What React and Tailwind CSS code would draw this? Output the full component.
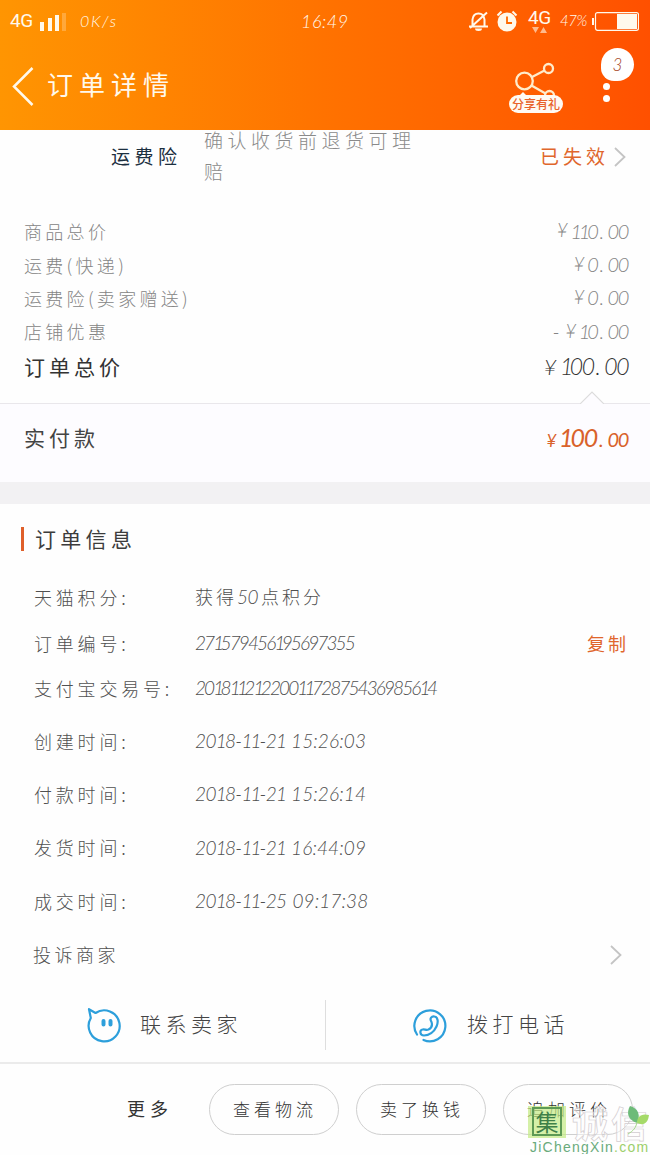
const PRICES = [
  { label: '商品总价', value: '110.00' },
  { label: '运费(快递)', value: '0.00' },
  { label: '运费险(卖家赠送)', value: '0.00' },
  { label: '店铺优惠', value: '10.00', minus: true },
]

const TIMES = [
  { label: '创建时间:', date: '2018-11-21', time: '15:26:03' },
  { label: '付款时间:', date: '2018-11-21', time: '15:26:14' },
  { label: '发货时间:', date: '2018-11-21', time: '16:44:09' },
  { label: '成交时间:', date: '2018-11-25', time: '09:17:38' },
]

const ACTIONS = ['查看物流', '卖了换钱', '追加评价']

function Chevron({ className }) {
  return (
    <svg viewBox="0 0 12 20" className={className} fill="none" stroke="currentColor" strokeWidth="1.8">
      <path d="M1 1l9.5 9L1 19" />
    </svg>
  )
}

// Ones are set tighter than the other digits
function Digits({ children, one }) {
  return children.split(/(1+)/).map((part, i) => (
    part.startsWith('1') ? <span key={i} className={one}>{part}</span> : part
  ))
}

function StatusBar() {
  return (
    <div className="flex h-[42px] items-center pl-[10px] pr-[10px]">
      <span className="w-[29px] shrink-0 font-['Roboto'] text-[19px] tracking-[-0.5px]">4G</span>
      <svg className="mt-[2px] h-[18px] w-[27px] shrink-0" viewBox="0 0 27 18" fill="currentColor">
        <rect x="1" y="9" width="4" height="9" />
        <rect x="9" y="5" width="4" height="13" />
        <rect x="16" y="2" width="4" height="16" />
        <rect x="23" y="0" width="4" height="18" opacity="0.25" />
      </svg>
      <span className="ml-[14px] w-[221px] shrink-0 font-['Lato'] text-[16px] font-light italic tracking-[1.700px]">0K/s</span>
      <span className="w-[167px] shrink-0 font-['Lato'] text-[18px] font-light italic tracking-[0.500px]">16:49</span>

      {/* muted bell */}
      <svg className="h-[22px] w-[21px] shrink-0" viewBox="0 0 21 22" fill="none" stroke="currentColor" strokeWidth="2">
        <path d="M1 16.500h19M4.500 16V9.500C5 5.500 7 3.500 10.500 3.500s5.500 2 6 6V16M19 2.500L2 18" />
        <path d="M7 18.500h7a3.500 2.500 0 0 1-7 0z" fill="currentColor" stroke="none" />
      </svg>
      {/* alarm */}
      <svg className="ml-[7px] h-[22px] w-[22px] shrink-0" viewBox="0 0 22 22" fill="none" stroke="currentColor">
        <circle cx="11" cy="12" r="9.500" fill="currentColor" stroke="none" />
        <path d="M1.500 5.500L5.500 1.500M20.500 5.500L16.500 1.500" strokeWidth="2" />
        <path d="M11 6.500V13h5" stroke="#ff6a00" strokeWidth="1.800" />
      </svg>
      <div className="ml-[10px] flex w-[32px] shrink-0 flex-col">
        <span className="font-['Roboto'] text-[19px] leading-[18px] tracking-[-0.500px]">4G</span>
        <svg className="ml-[4px] h-[7px] w-[16px] opacity-60" viewBox="0 0 16 7" fill="currentColor">
          <path d="M0 0h7L3.500 6zM8 6h7l-3.500-6z" />
        </svg>
      </div>
      <span className="mb-[1px] w-[32px] shrink-0 font-['Lato'] text-[15px] font-light italic tracking-[-0.500px]">47%</span>
      <svg className="h-[19px] w-[47px] shrink-0" viewBox="0 0 47 19" fill="none" stroke="currentColor">
        <rect x="3.500" y="0.700" width="43" height="17.600" rx="2" strokeWidth="1.200" />
        <rect x="25" y="2" width="20" height="15" fill="currentColor" stroke="none" />
        <path d="M1 6v7" strokeWidth="2" />
      </svg>
    </div>
  )
}

function Header() {
  return (
    <header className="h-[130px] shrink-0 bg-linear-to-r from-[#ff9502] via-[#ff7200] to-[#ff5000] text-[#fff9ec]">
      <StatusBar />
      <div className="flex h-[88px] items-start pl-[12px]">
        <svg className="mt-[25px] h-[39px] w-[22px]" viewBox="0 0 22 39" fill="none" stroke="currentColor" strokeWidth="2.500">
          <path d="M20.500 1L2 19.500 20.500 38" />
        </svg>
        <h1 className="ml-[13px] mt-[22px] w-[462px] text-[26px] leading-[40px] tracking-[6px]">订单详情</h1>

        <div className="relative mt-[20px] h-[52px] w-[54px]">
          <svg className="absolute left-[6px] top-0 h-[40px] w-[42px]" viewBox="0 0 42 40" fill="none" stroke="#ffeccb" strokeWidth="2.300">
            <circle cx="9.500" cy="19" r="8.300" />
            <circle cx="33.500" cy="6.500" r="4.500" />
            <circle cx="34.500" cy="33.500" r="4.500" />
            <path d="M17 15L29.500 8.500M16.500 23.500L30.500 31.500" />
            <path d="M4 34l4-4 4 4z" fill="#fffaf3" stroke="none" />
          </svg>
          <span className="absolute left-0 top-[33px] h-[18px] w-[54px] rounded-full bg-[#fffaf3] text-center text-[12px] font-medium leading-[18px] text-[#e8622a]">
            分享有礼
          </span>
        </div>

        <div className="ml-[38px] flex w-[33px] flex-col">
          <div className="mt-[6px] flex h-[33px] w-[33px] items-center justify-center rounded-[16.500px] rounded-bl-[13px] bg-white font-['Lato'] text-[17px] font-light italic text-[#a5431c]">
            3
          </div>
          <span className="ml-[2px] mt-[2px] h-[7px] w-[7px] rounded-full bg-white" />
          <span className="ml-[2px] mt-[5px] h-[7px] w-[7px] rounded-full bg-white" />
        </div>
      </div>
    </header>
  )
}

function Insurance() {
  return (
    <div className="flex h-[85px] items-start pl-[111px] pr-[24px]">
      <span className="mt-[11px] w-[93px] text-[19px] leading-[30px] tracking-[4.500px] text-[#1c2f3f]">运费险</span>
      <p className="mt-[-6px] w-[225px] text-[19px] font-light leading-[31px] tracking-[4.500px] text-[#8a8a8a]">
        确认收货前退货可理赔
      </p>
      <span className="ml-auto mt-[11px] text-[19px] leading-[30px] tracking-[4px] text-[#e0662c]">已失效</span>
      <Chevron className="ml-[5px] mt-[17px] h-[20px] w-[12px] text-[#c4c4c4]" />
    </div>
  )
}

function Amount({ value, minus }) {
  const [whole, cents] = value.split('.')
  return (
    <span className="flex items-center pb-[2px] font-['Lato'] text-[20px] italic tracking-[-1.400px]">
      {minus && <span className="mr-[7px]">-</span>}
      <span className="mr-[4px] text-[19px]">¥</span>
      <Digits one="tracking-[-3.200px]">{whole}</Digits>
      <span className="ml-[2px] mr-[5px]">.</span>
      <span className="mr-[1px]">{cents}</span>
    </span>
  )
}

function Totals() {
  return (
    <>
      {PRICES.map(p => (
        <div key={p.label} className="flex h-[33.400px] items-center justify-between pl-[24px] pr-[21px] font-light text-[#858585]">
          <span className="text-[18px] tracking-[3.300px]">{p.label}</span>
          <Amount value={p.value} minus={p.minus} />
        </div>
      ))}
      <div className="flex h-[36px] items-center justify-between pl-[24px] pr-[21px] text-[#333]">
        <span className="text-[21px] tracking-[4px]">订单总价</span>
        <span className="flex items-center font-['Lato'] text-[23px] font-light italic tracking-[-1.500px]">
          <span className="mr-[5px] text-[22px]">¥</span>
          <Digits one="tracking-[-3.500px]">100</Digits>
          <span className="ml-[2px] mr-[5px]">.</span>
          <span className="mr-[1px]">00</span>
        </span>
      </div>
      {/* caret sitting on the divider */}
      <div className="flex h-[19px] items-end justify-end border-b border-[#e9e7eb] pr-[46px]">
        <svg className="mb-[-1px] h-[13px] w-[24px]" viewBox="0 0 24 13" fill="#fdfcff" stroke="#dcdcdc" strokeWidth="1.200">
          <path d="M0 13L12 1l12 12" />
        </svg>
      </div>
      <div className="flex h-[78px] items-center justify-between bg-[#fdfcff] pb-[9px] pl-[24px] pr-[21px]">
        <span className="text-[21px] tracking-[4px] text-[#444]">实付款</span>
        <span className="flex items-baseline font-['Lato'] text-[20px] italic tracking-[-1.300px] text-[#d9622b]">
          <span className="mr-[4px] text-[17px]">¥</span>
          <span className="text-[25px]"><Digits one="tracking-[-3px]">100</Digits></span>
          <span className="ml-[2px] mr-[5px]">.</span>
          <span className="mr-[1px]">00</span>
        </span>
      </div>
    </>
  )
}

function InfoRow({ label, children, className = 'h-[53.300px]' }) {
  return (
    <div className={`flex items-center pl-[34px] pr-[21px] text-[18px] text-[#505050] ${className}`}>
      <span className="w-[161px] shrink-0 font-light tracking-[3.800px]">{label}</span>
      {children}
    </div>
  )
}

function OrderInfo() {
  return (
    <>
      <div className="flex h-[70px] items-center pl-[21px]">
        <span className="h-[24px] w-[3px] bg-[#df5f2a]" />
        <h2 className="ml-[11px] text-[21px] tracking-[4.300px] text-[#3c3c3c]">订单信息</h2>
      </div>
      <InfoRow label="天猫积分:" className="h-[48px]">
        <span className="text-[18px] font-light tracking-[3px]">
          获得<span className="font-['Lato'] text-[19px] italic tracking-[-0.500px]">50</span>
          <span className="ml-[3px]">点积分</span>
        </span>
      </InfoRow>
      <InfoRow label="订单编号:" className="h-[43px]">
        <span className="font-['Lato'] text-[19px] font-light italic tracking-[-1.900px]">
          <Digits one="tracking-[-3.700px]">271579456195697355</Digits>
        </span>
        <span className="ml-auto text-[18px] tracking-[3px] text-[#e0662c]">复制</span>
      </InfoRow>
      <InfoRow label="支付宝交易号:" className="h-[47px]">
        <span className="font-['Lato'] text-[19px] font-light italic tracking-[-1.900px]">
          <Digits one="tracking-[-3.700px]">2018112122001172875436985614</Digits>
        </span>
      </InfoRow>
      <div className="h-[3px]" />
      {TIMES.map(t => (
        <InfoRow key={t.label} label={t.label}>
          <span className="whitespace-pre font-['Lato'] text-[19px] font-light italic">
            <span className="tracking-[-0.600px]">
              <Digits one="tracking-[-2px]">{t.date}</Digits>
            </span>
            <span className="ml-[1px] tracking-[0.100px]">{' ' + t.time}</span>
          </span>
        </InfoRow>
      ))}
      <div className="mt-[1px] flex h-[53px] items-center justify-between pl-[33px] pr-[28px]">
        <span className="mb-[2px] text-[18px] font-light tracking-[3.500px] text-[#505050]">投诉商家</span>
        <Chevron className="h-[20px] w-[12px] text-[#c4c4c4]" />
      </div>
    </>
  )
}

function Contact() {
  return (
    <div className="mt-[18px] flex h-[50px] items-center text-[21px] font-light text-[#444]">
      <div className="flex h-full w-[326px] items-center border-r border-[#dedede] pl-[86px]">
        <svg className="h-[36px] w-[36px]" viewBox="0 0 36 36" fill="none" stroke="#2d9fdb" strokeWidth="2.200" strokeLinejoin="round">
          <path d="M9.500 6A15.500 15.500 0 1 1 4.800 11L3 2.200z" />
          <path d="M17.500 14v3.500M24.500 14v3.500" strokeWidth="4" strokeLinecap="round" />
        </svg>
        <span className="mb-[2px] ml-[18px] tracking-[4.500px]">联系卖家</span>
      </div>
      <div className="flex items-center pl-[86px]">
        <svg className="h-[36px] w-[36px]" viewBox="0 0 36 36" fill="none" stroke="#2d9fdb" strokeWidth="2.200" strokeLinecap="round">
          <path d="M5 27.500A15.500 15.500 0 1 1 11.500 33" />
          <path d="M19.500 15C17 11 20 9 22.500 9.500C26 10 26.500 15 24.500 19.500C22 25 17 28.500 12 28.500C7.500 28.500 7.500 23 10.500 22.500C13 22 14 23.500 16.500 22.500C19.500 21 20.500 18 19.500 15z" />
        </svg>
        <span className="mb-[2px] ml-[19px] tracking-[4.500px]">拨打电话</span>
      </div>
    </div>
  )
}

function Watermark() {
  return (
    <div className="absolute bottom-0 left-[528px] w-[122px]">
      <div className="flex h-[36px] items-center">
        <div className="flex h-[32px] w-[38px] items-center justify-center bg-[#c3ea83]/70">
          <span className="flex h-[29px] w-[30px] items-center justify-center border-2 border-[#5d9a55] text-[23px] leading-none text-[#3f8048]">集</span>
        </div>
        <span className="ml-[6px] whitespace-nowrap text-[36px] font-bold leading-[36px] tracking-[3px] text-white/50 [-webkit-text-stroke:0.700px_#d3cdd0]">诚信</span>
      </div>
      <svg className="absolute left-[98px] top-[2px] h-[30px] w-[26px]" viewBox="0 0 26 30">
        <path d="M4 0c8 2 11 9 7 17C2 14 0 7 4 0z" fill="#6dbb79" />
        <path d="M11 17c0-6 4-10 12-8-1 8-5 11-12 8z" fill="#a5da69" />
        <path d="M11 16c-1 6-4 9-9 12" fill="none" stroke="#a5d98b" />
      </svg>
      <p className="ml-[2px] h-[14px] whitespace-nowrap font-['Liberation_Sans'] text-[14px] leading-[14px] tracking-[1.250px] text-[#6aab7c]">
        JiChengXin<span className="text-[#9ccf6b]">.com</span>
      </p>
    </div>
  )
}

function Footer() {
  return (
    <footer className="relative mt-[12px] flex h-[92px] items-start overflow-hidden border-t-2 border-[#ebebeb] bg-[#fefefe] pl-[127px] pt-[20px]">
      <button className="h-[51px] w-[82px] pb-[2px] text-left text-[18px] tracking-[5px] text-[#333]">更多</button>
      <div className="flex gap-[17px]">
        {ACTIONS.map(a => (
          <button key={a} className="h-[51px] w-[130px] rounded-full border border-[#cfcfcf] pb-[2px] pl-[2px] text-center text-[17px] font-light tracking-[4px] text-[#333]">
            {a}
          </button>
        ))}
      </div>
      <Watermark />
    </footer>
  )
}

export default function App() {
  return (
    <div className="flex h-[1155px] w-[650px] flex-col overflow-hidden bg-[#fefefe] font-['Noto_Sans_CJK_SC',sans-serif]">
      <Header />
      <Insurance />
      <Totals />
      <div className="h-[22px] shrink-0 bg-[#f2f1f3]" />
      <OrderInfo />
      <Contact />
      <Footer />
    </div>
  )
}
